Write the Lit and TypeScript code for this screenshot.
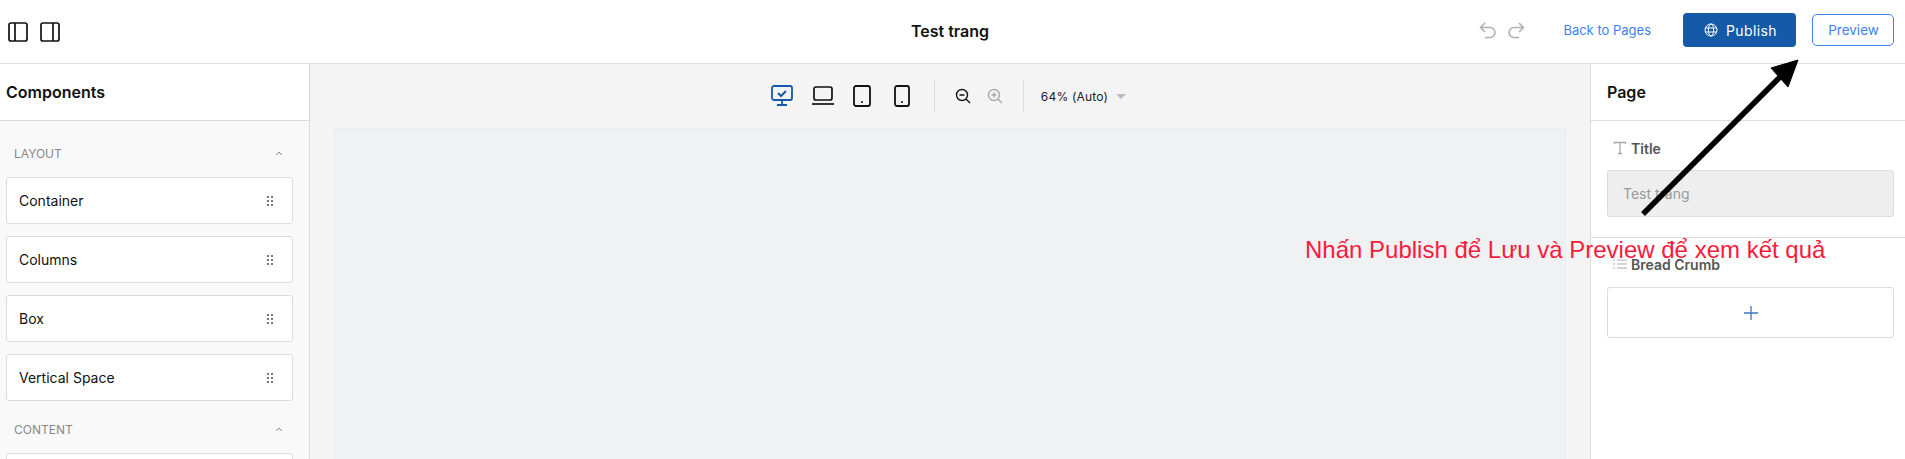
import { LitElement, html, css, svg } from "lit";
import { customElement } from "lit/decorators.js";

const grip = html`<svg class="grip" width="8" height="12" viewBox="0 0 8 12" fill="#777"><rect x="1" y="1" width="2" height="2"/><rect x="5" y="1" width="2" height="2"/><rect x="1" y="5" width="2" height="2"/><rect x="5" y="5" width="2" height="2"/><rect x="1" y="9" width="2" height="2"/><rect x="5" y="9" width="2" height="2"/></svg>`;
const chevron = html`<svg width="10" height="6" viewBox="0 0 10 6" fill="none" stroke="#888" stroke-width="1"><path d="M2 5l3-3 3 3"/></svg>`;

@customElement("app-root")
export class AppRoot extends LitElement {
  static styles = css`
    :host { display: block; height: 459px; overflow: hidden; position: relative; font-family: Inter, "Liberation Sans", sans-serif; color: #111; background: #fff; }
    .top { height: 63px; box-sizing: content-box; border-bottom: 1px solid #dcdcdc; display: grid; grid-template-columns: 1fr auto 1fr; align-items: center; }
    .top-l { display: flex; gap: 12px; padding-left: 8px; }
    .top-title { font-size: 16px; font-weight: 600; padding-right: 5px; padding-bottom: 2px; }
    .top-r { display: flex; align-items: center; justify-content: flex-end; padding-right: 11px; padding-bottom: 3px; }
    .hist { display: flex; gap: 10px; margin-right: 38px; }
    .back { font-size: 13px; color: #3d82f0; margin-right: 32px; }
    .publish { width: 113px; height: 34px; box-sizing: border-box; padding-left: 2px; background: #1559a9; color: #fff; border-radius: 4px; display: flex; align-items: center; justify-content: center; gap: 8px; font-size: 14px; letter-spacing: .4px; margin-right: 16px; }
    .preview { width: 82px; height: 32px; box-sizing: border-box; padding-left: 1px; border: 1px solid #3d82f0; border-radius: 5px; color: #3d82f0; font-size: 13.5px; display: flex; align-items: center; justify-content: center; }
    .main { display: grid; grid-template-columns: 310px 1fr 315px; height: 395px; }
    .left { background: #f9f9f9; border-right: 1px solid #dcdcdc; }
    .side-head { height: 56px; background: #fff; border-bottom: 1px solid #dcdcdc; display: flex; align-items: center; font-size: 16px; font-weight: 600; padding-left: 6px; }
    .right .side-head { padding-left: 16px; }
    .sec { display: flex; justify-content: space-between; align-items: center; font-size: 12px; color: #888; padding: 0 25px 0 14px; height: 16px; }
    .sec.first { margin-top: 24px; margin-bottom: 16px; }
    .sec.next { margin-top: 20px; margin-bottom: 16px; }
    .card { width: 287px; box-sizing: border-box; height: 47px; margin: 0 0 12px 6px; background: #fff; border: 1px solid #dcdcdc; border-radius: 3px; display: flex; align-items: center; justify-content: space-between; padding: 0 18px 0 12px; font-size: 14px; }
    .center { background: #f4f4f4; display: flex; flex-direction: column; overflow: hidden; }
    .tools { height: 64px; flex: none; display: flex; align-items: center; justify-content: center; padding-right: 4px; }
    .tools svg { display: block; }
    .devs { display: flex; align-items: center; gap: 17px; }
    .devs .phone { margin-left: 4px; }
    .sep { width: 1px; height: 32px; background: #dcdcdc; margin: 0 20px; }
    .sep.a { margin-left: 23px; }
    .sep.b { margin-right: 17px; }
    .zoom { display: flex; gap: 16px; align-items: center; }
    .pct { display: flex; align-items: center; gap: 8px; font-size: 12px; letter-spacing: .2px; color: #222; }
    .tri { width: 0; height: 0; border-left: 5px solid transparent; border-right: 5px solid transparent; border-top: 5px solid #bbb; margin-top: 1px; }
    .canvas { margin: 0 24px 0 24px; flex: 1; background: #f0f1f3; border: 1px solid #ececec; border-bottom: none; }
    .right { border-left: 1px solid #dcdcdc; background: #fff; }
    .group { padding: 0 11px 0 16px; }
    .g1 { height: 116px; border-bottom: 1px solid #dcdcdc; }
    .label { display: flex; align-items: center; gap: 4px; font-size: 14px; font-weight: 600; color: #555; height: 20px; padding-left: 6px; }
    .g1 .label { padding-top: 17px; margin-bottom: 12px; }
    .g2 .label { padding-top: 16px; margin-bottom: 13px; }
    .input { height: 47px; box-sizing: border-box; background: #eee; border: 1px solid #dcdcdc; border-radius: 3px; display: flex; align-items: center; padding-left: 15px; font-size: 14px; color: #9a9a9a; }
    .add { height: 51px; box-sizing: border-box; border: 1px solid #dcdcdc; border-radius: 3px; display: flex; align-items: center; justify-content: center; }
    .arrow { position: absolute; left: 1630px; top: 50px; }
    .note { position: absolute; left: 1305px; top: 236px; font-family: "Liberation Sans", Arial, sans-serif; font-size: 24px; color: #fb1a3c; white-space: nowrap; line-height: 28px; }
  `;

  render() {
    return html`
      <div class="top">
        <div class="top-l">
          <svg width="20" height="20" viewBox="0 0 20 20" fill="none" stroke="#111" stroke-width="1.7"><rect x="1" y="1" width="18" height="18" rx="2"/><path d="M7 1v18"/></svg>
          <svg width="20" height="20" viewBox="0 0 20 20" fill="none" stroke="#111" stroke-width="1.7"><rect x="1" y="1" width="18" height="18" rx="2"/><path d="M13 1v18"/></svg>
        </div>
        <div class="top-title">Test trang</div>
        <div class="top-r">
          <div class="hist">
            <svg width="18" height="18" viewBox="0 0 18 18" fill="none" stroke="#b0b0b0" stroke-width="1.6"><path d="M6 2L1.500 6.500 6 11M1.500 6.500H11a5 5 0 0 1 0 10H6"/></svg>
            <svg width="18" height="18" viewBox="0 0 18 18" fill="none" stroke="#b0b0b0" stroke-width="1.6"><path d="M12 2l4.500 4.500L12 11M16.500 6.500H7a5 5 0 0 0 0 10h5"/></svg>
          </div>
          <div class="back">Back to Pages</div>
          <div class="publish">
            <svg width="14" height="14" viewBox="0 0 14 14" fill="none" stroke="#fff" stroke-width="1"><circle cx="7" cy="7" r="6"/><ellipse cx="7" cy="7" rx="2.6" ry="6"/><path d="M1 5h12M1 9h12"/></svg>
            Publish
          </div>
          <div class="preview">Preview</div>
        </div>
      </div>
      <div class="main">
        <div class="left">
          <div class="side-head">Components</div>
          <div class="sec first"><span>LAYOUT</span>${chevron}</div>
          <div class="card"><span>Container</span>${grip}</div>
          <div class="card"><span>Columns</span>${grip}</div>
          <div class="card"><span>Box</span>${grip}</div>
          <div class="card"><span>Vertical Space</span>${grip}</div>
          <div class="sec next"><span>CONTENT</span>${chevron}</div>
          <div class="card"></div>
        </div>
        <div class="center">
          <div class="tools">
            <div class="devs">
              <svg width="24" height="22" viewBox="0 0 24 22" fill="none" stroke="#1559a9" stroke-width="1.8"><rect x="2" y="1" width="20" height="14" rx="2"/><path d="M12 15v4M7 20h10"/><path d="M8 8l3 3 5-5" stroke-width="2"/></svg>
              <svg width="24" height="22" viewBox="0 0 24 22" fill="none" stroke="#111" stroke-width="1.7"><rect x="3" y="2" width="18" height="13" rx="2"/><path d="M1 19h22"/></svg>
              <svg width="20" height="22" viewBox="0 0 20 22" fill="none" stroke="#111" stroke-width="1.8"><rect x="2" y="1" width="16" height="20" rx="2"/><path d="M9 17h2" stroke-width="1.6"/></svg>
              <svg class="phone" width="18" height="22" viewBox="0 0 18 22" fill="none" stroke="#111" stroke-width="1.8"><rect x="2" y="1" width="14" height="20" rx="2"/><path d="M8 17h2" stroke-width="1.6"/></svg>
            </div>
            <div class="sep a"></div>
            <div class="zoom">
              <svg width="16" height="16" viewBox="0 0 16 16" fill="none" stroke="#111" stroke-width="1.4"><circle cx="7" cy="7" r="5.5"/><path d="M11 11l4 4M4.500 7h5"/></svg>
              <svg width="16" height="16" viewBox="0 0 16 16" fill="none" stroke="#aaa" stroke-width="1.4"><circle cx="7" cy="7" r="5.5"/><path d="M11 11l4 4M4.500 7h5M7 4.500v5"/></svg>
            </div>
            <div class="sep b"></div>
            <div class="pct">64% (Auto)<span class="tri"></span></div>
          </div>
          <div class="canvas"></div>
        </div>
        <div class="right">
          <div class="side-head">Page</div>
          <div class="group g1">
            <div class="label">
              <svg width="14" height="14" viewBox="0 0 14 14" fill="none" stroke="#aaa" stroke-width="1.3"><path d="M1.500 3V1.500h11V3M7 1.500v11M5 12.500h4"/></svg>
              Title
            </div>
            <div class="input">Test trang</div>
          </div>
          <div class="group g2">
            <div class="label">
              <svg width="14" height="12" viewBox="0 0 14 12" fill="none" stroke="#aaa" stroke-width="1.2"><path d="M4 2h10M4 6h10M4 10h10M0 2h2M0 6h2M0 10h2"/></svg>
              Bread Crumb
            </div>
            <div class="add">
              <svg width="16" height="16" viewBox="0 0 16 16" fill="none" stroke="#3a78c0" stroke-width="1.3"><path d="M8 1v14M1 8h14"/></svg>
            </div>
          </div>
        </div>
      </div>
      <svg class="arrow" width="180" height="170" viewBox="0 0 180 170">${svg`<path d="M13 164L150 27" stroke="#000" stroke-width="5.5" fill="none"/><path d="M168 10L141 18L158 37Z" fill="#000" stroke="#000" stroke-width="1"/>`}</svg>
      <div class="note">Nhấn Publish để Lưu và Preview để xem kết quả</div>
    `;
  }
}
